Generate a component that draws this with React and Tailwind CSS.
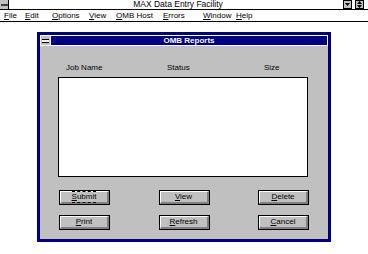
import React from "react";

function Btn({ label, u, focus }) {
  const rest = label.slice(1);
  return (
    <div className="w-[51px] h-[15px] border border-black bg-[#c0c0c0] flex">
      <div className="flex-1 flex items-center justify-center border-t border-l border-white border-r-2 border-b-2 border-r-[#808080] border-b-[#808080]">
        <span className={focus ? "border-y border-dashed border-black leading-[8px] py-[1px]" : "leading-[8px]"}>
          <span className="underline">{u}</span>
          {rest}
        </span>
      </div>
    </div>
  );
}

export default function App() {
  const menus = [
    ["F", "ile", "w-[21px]"],
    ["E", "dit", "w-[27px]"],
    ["O", "ptions", "w-[37px]"],
    ["V", "iew", "w-[27px]"],
    ["O", "MB Host", "w-[47px]"],
    ["E", "rrors", "w-[40px]"],
    ["W", "indow", "w-[33px]"],
    ["H", "elp", "w-[20px]"],
  ];
  return (
    <div
      className="w-[368px] h-[254px] bg-white overflow-hidden text-black text-[9px]"
      style={{ fontFamily: '"Liberation Sans", Arial, sans-serif' }}
    >
      {/* app title bar */}
      <div className="h-[10px] border-b border-black flex items-stretch">
        <div className="w-[9px] h-[9px] bg-[#c0c0c0] border-r border-black flex items-center justify-center">
          <div className="w-[7px] h-[2px] bg-[#404040]" />
        </div>
        <div className="flex-1 text-center leading-[9px] text-[8.5px] pl-[4px]">MAX Data Entry Facility</div>
        <div className="flex gap-[3px] mr-[4px]">
          <div className="w-[9px] h-[9px] bg-[#c0c0c0] border border-black flex items-center justify-center">
            <svg width="5" height="3" viewBox="0 0 5 3"><path d="M0 0H5L2.5 3Z" fill="#000" /></svg>
          </div>
          <div className="w-[9px] h-[9px] bg-[#c0c0c0] border border-black flex items-center justify-center">
            <svg width="5" height="7" viewBox="0 0 5 7"><path d="M0 3H5L2.5 0Z M0 4H5L2.5 7Z" fill="#000" /></svg>
          </div>
        </div>
      </div>
      {/* menu bar */}
      <div className="h-[12px] border-b border-black flex items-center leading-[9px] text-[8px] pl-[4px]">
        {menus.map(([u, r, w], i) => (
          <span key={i} className={w + " whitespace-nowrap"}>
            <span className="underline">{u}</span>
            {r}
          </span>
        ))}
      </div>
      {/* dialog */}
      <div className="ml-[37px] mt-[10px] w-[294px] h-[210px] border-[3px] border-[#000080] bg-[#c0c0c0] flex flex-col">
        <div className="h-[11px] bg-[#000080] border border-white flex items-stretch">
          <div className="w-[10px] bg-[#c0c0c0] flex items-center justify-center border-r border-white">
            <div className="w-[7px] h-[2px] bg-white border-y border-black box-content" />
          </div>
          <div className="flex-1 text-center text-white font-bold leading-[9px] text-[8px]">OMB Reports</div>
        </div>
        <div className="flex-1 flex flex-col px-[18px] text-[8px]">
          <div className="flex mt-[17px] h-[9px] leading-[9px]">
            <span className="ml-[8px] w-[101px]">Job Name</span>
            <span className="w-[97px]">Status</span>
            <span>Size</span>
          </div>
          <div className="mt-[5px] w-[250px] h-[100px] bg-white border border-black" />
          <div className="mt-[13px] flex justify-between pl-[1px] pr-[1px]">
            <Btn u="S" label="Submit" focus />
            <Btn u="V" label="View" />
            <Btn u="D" label="Delete" />
          </div>
          <div className="mt-[10px] flex justify-between pl-[1px] pr-[1px]">
            <Btn u="P" label="Print" />
            <Btn u="R" label="Refresh" />
            <Btn u="C" label="Cancel" />
          </div>
        </div>
      </div>
    </div>
  );
}
